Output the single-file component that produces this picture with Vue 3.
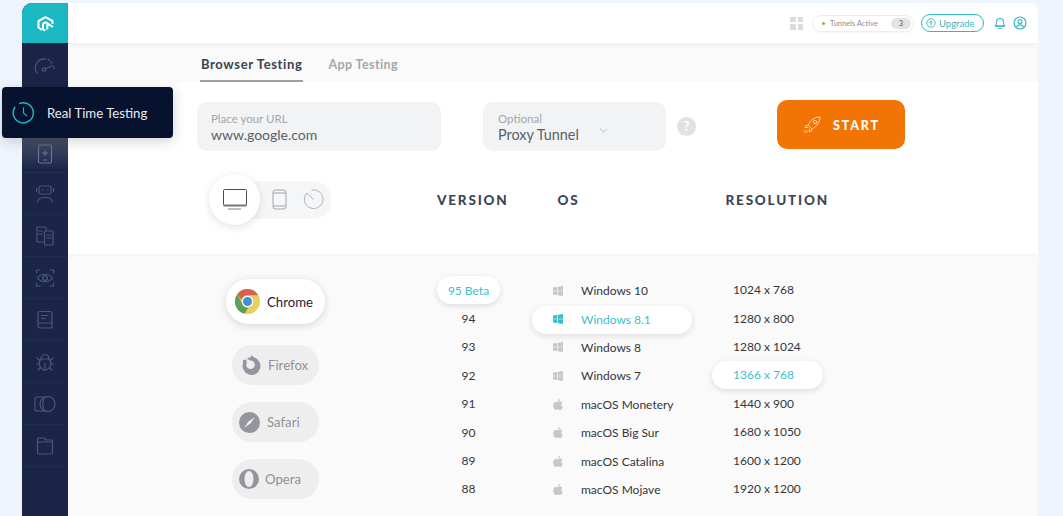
<script setup>
const navIcons = ['speed', 'clock', 'phone', 'robot', 'devices', 'eye', 'book', 'bug', 'compare', 'folder']
const versions = ['95 Beta', '94', '93', '92', '91', '90', '89', '88']
const systems = [
  { name: 'Windows 10', win: true },
  { name: 'Windows 8.1', win: true, active: true },
  { name: 'Windows 8', win: true },
  { name: 'Windows 7', win: true },
  { name: 'macOS Monetery' },
  { name: 'macOS Big Sur' },
  { name: 'macOS Catalina' },
  { name: 'macOS Mojave' },
]
const resolutions = ['1024 x 768', '1280 x 800', '1280 x 1024', '1366 x 768', '1440 x 900', '1680 x 1050', '1600 x 1200', '1920 x 1200']
</script>

<template>
  <div class="page">
    <div class="shell">
      <aside class="side">
        <div class="logo">
          <svg width="17" height="16" viewBox="0 0 17 16" fill="none" stroke="#fff" stroke-width="2" stroke-linejoin="round">
            <path d="M5 14 L1.500 11.500 V5 L8.500 1.200 L15.500 5 V8" />
            <path d="M8.500 6 L15.800 11 M8.500 6 L6 8 V13 L8.200 14.800 M10.300 8 V13.500" />
          </svg>
        </div>
        <div v-for="n in navIcons" :key="n" class="nav" :class="'nav-' + n">
          <svg width="22" height="22" viewBox="0 0 22 22" fill="none" stroke="#4a5878" stroke-width="1.200" stroke-linecap="round" stroke-linejoin="round">
            <template v-if="n === 'speed'">
              <path d="M3 18 A9 9 0 0 1 12 4" />
              <path d="M14.500 4.500 L19 9 M20 12 V15" stroke-dasharray="1.500 2" />
              <circle cx="10" cy="14.500" r="1.700" />
              <path d="M12 13.500 L19 10.500" />
            </template>
            <template v-else-if="n === 'phone'">
              <rect x="4.500" y="2" width="13" height="18" rx="1.500" />
              <path d="M11 7.500 V12.500 M8.500 10 H13.500 M9.500 17 H12.500" />
            </template>
            <template v-else-if="n === 'robot'">
              <rect x="5" y="3" width="12" height="8" rx="1.500" />
              <path d="M8 7 H9 M13 7 H14 M2.500 5.500 V8.500 M19.500 5.500 V8.500 M3.500 19 C3.500 13 18.500 13 18.500 19" />
            </template>
            <template v-else-if="n === 'devices'">
              <rect x="3" y="2" width="9" height="15" rx="1" />
              <rect x="10.500" y="6" width="8.500" height="14" rx="1" fill="#1a2548" />
              <path d="M5 6 H8 M5 9 H8 M13 10 H17 M13 13 H17" />
            </template>
            <template v-else-if="n === 'eye'">
              <path d="M2.500 6 V3 H6 M16 3 H19.500 V6 M2.500 16 V19 H6 M16 19 H19.500 V16" />
              <path d="M3.500 11 C7 6 15 6 18.500 11 C15 16 7 16 3.500 11 Z" />
              <circle cx="11" cy="11" r="2.400" />
            </template>
            <template v-else-if="n === 'book'">
              <path d="M4 15 V4.500 A2 2 0 0 1 6 2.500 H16 A2 2 0 0 1 18 4.500 V19 H6 A2 2 0 0 1 4 17 V15.500 A2 2 0 0 1 6 14 H18" />
              <path d="M7.500 6.500 H14 M7.500 9.500 H11.500" />
            </template>
            <template v-else-if="n === 'bug'">
              <path d="M7 8 C7 2 15 2 15 8 C18 11 18 17 11 19.500 C4 17 4 11 7 8 Z" />
              <path d="M7 8 H15 M11 12 V19 M3 7 L6 9.500 M19 7 L16 9.500 M2.500 13 H5 M17 13 H19.500 M4 19 L6.500 16.500 M18 19 L15.500 16.500" />
            </template>
            <template v-else-if="n === 'compare'">
              <path d="M13 4 H3 A2 2 0 0 0 1 6 V16 A2 2 0 0 0 3 18 H13" />
              <circle cx="13.500" cy="11" r="7.500" />
              <path d="M11 4 C8 8 8 14 11 18" />
            </template>
            <template v-else-if="n === 'folder'">
              <path d="M3.500 15 V4 A1 1 0 0 1 4.500 3 H10 L12 5 H17.500 A1 1 0 0 1 18.500 6 V7" />
              <rect x="3.500" y="7" width="15" height="12" rx="1.500" />
            </template>
          </svg>
        </div>
      </aside>

      <main class="main">
        <header class="top">
          <span class="grid-ico"><i></i><i></i><i></i><i></i></span>
          <div class="tunnels">
            <span class="dot"></span>
            <span class="tlabel">Tunnels Active</span>
            <span class="count">3</span>
          </div>
          <div class="upgrade">
            <svg width="10" height="10" viewBox="0 0 10 10" fill="none" stroke="#35b6c4" stroke-width="0.900"><circle cx="5" cy="5" r="4.200"/><path d="M5 7.500 V3 M3.300 4.600 L5 3 L6.700 4.600" /></svg>
            <span>Upgrade</span>
          </div>
          <svg class="bell" width="12" height="14" viewBox="0 0 13 14" fill="none" stroke="#35b6c4" stroke-width="1.100" stroke-linejoin="round"><path d="M1.500 10 C3 8.500 2.500 7 2.800 5 C3.200 1 9.800 1 10.200 5 C10.500 7 10 8.500 11.500 10 Z"/><path d="M1 10.500 H12 M5 13 H8"/></svg>
          <svg width="14" height="14" viewBox="0 0 14 14" fill="none" stroke="#35b6c4" stroke-width="1.100"><circle cx="7" cy="7" r="6"/><circle cx="7" cy="5.600" r="2"/><path d="M3.500 11.300 C4 8 10 8 10.500 11.300"/></svg>
        </header>

        <nav class="tabs">
          <span class="tab on">Browser Testing</span>
          <span class="tab off">App Testing</span>
        </nav>

        <section class="panel">
          <div class="form">
            <div class="field url">
              <span class="flabel">Place your URL</span>
              <span class="fvalue">www.google.com</span>
            </div>
            <div class="field proxy">
              <span class="flabel">Optional</span>
              <span class="fvalue">Proxy Tunnel</span>
              <svg class="chev" width="9" height="5" viewBox="0 0 10 6" fill="none" stroke="#a9adb3" stroke-width="1"><path d="M1 1 L5 5 L9 1"/></svg>
            </div>
            <span class="help">?</span>
            <button class="start">
              <svg width="20" height="20" viewBox="0 0 20 20" fill="none" stroke="#fbd9c0" stroke-width="1" stroke-linejoin="round" stroke-linecap="round">
                <path d="M6.500 10 C8 5 13 2 18 2 C18 7 15 12 10 13.500 Z"/>
                <circle cx="13" cy="7" r="1.700"/>
                <path d="M6.500 10 L4 10.500 L3 12.500 L6 12.500 M10 13.500 L9.500 16 L7.500 17 L7.500 14 M4 15 L2 17 M5.500 16 L4 18"/>
              </svg>
              <span>START</span>
            </button>
          </div>
          <div class="heads">
            <div class="seg">
              <span class="seg-on">
                <svg width="24" height="21" viewBox="0 0 24 21" fill="none" stroke="#4a4f57" stroke-width="1"><rect x="0.500" y="0.500" width="23" height="16" rx="1"/><path d="M0.500 16.500 H23.500" stroke="#777" stroke-width="2"/><path d="M5 20 H18" stroke="#aaa" stroke-width="1.500"/></svg>
              </span>
              <svg class="seg-i" width="15" height="21" viewBox="0 0 15 21" fill="none" stroke="#a0a4aa" stroke-width="1"><rect x="1" y="1" width="13" height="19" rx="2.500"/><path d="M1 4 H14 M1 17 H14"/></svg>
              <svg class="seg-i2" width="21" height="21" viewBox="0 0 21 21" fill="none" stroke="#b0b4b9" stroke-width="1"><path d="M8.500 1.200 A9.300 9.300 0 1 1 3.800 4 L10.500 10.500"/></svg>
            </div>
            <span class="h h-ver">VERSION</span>
            <span class="h h-os">OS</span>
            <span class="h h-res">RESOLUTION</span>
          </div>
        </section>

        <section class="list">
          <div class="browsers">
            <div class="br br-on">
              <svg width="25" height="25" viewBox="0 0 25 25">
                <circle cx="12.500" cy="12.500" r="12.500" fill="#e8cf5f"/>
                <path d="M12.500 0 A12.500 12.500 0 0 1 23.300 6.250 H12.500 A6.250 6.250 0 0 0 6.500 10.800 L2.200 5.300 A12.500 12.500 0 0 1 12.500 0 Z" fill="#d9604c"/>
                <path d="M2.200 5.300 L7 14 A6.250 6.250 0 0 0 13.300 18.700 L9.500 24.700 A12.500 12.500 0 0 1 2.200 5.300 Z" fill="#5ca15a"/>
                <circle cx="12.500" cy="12.500" r="5.800" fill="#fff"/>
                <circle cx="12.500" cy="12.500" r="4.500" fill="#3f92d2"/>
              </svg>
              <span>Chrome</span>
            </div>
            <div class="br br-ff">
              <svg width="19" height="20" viewBox="0 0 19 20">
                <circle cx="9.500" cy="11" r="9" fill="#94969e"/>
                <path d="M9 0 L14 4 L9 5 Z" fill="#94969e"/>
                <circle cx="8.500" cy="9.800" r="4.300" fill="#eee"/>
                <path d="M2 1.500 L8 5.500 L5.800 8 L0 7 Z" fill="#eee"/>
                <path d="M1 5 L4.500 4.500 L4.500 9 L1 10 Z" fill="#94969e"/>
              </svg>
              <span>Firefox</span>
            </div>
            <div class="br">
              <svg width="21" height="21" viewBox="0 0 21 21"><circle cx="10.500" cy="10.500" r="10.500" fill="#94969e"/><path d="M16 5 L11.500 11.500 L5 16 L9.500 9.500 Z" fill="#eee"/></svg>
              <span>Safari</span>
            </div>
            <div class="br br-op">
              <svg width="20" height="20" viewBox="0 0 20 20"><circle cx="10" cy="10" r="10" fill="#94969e"/><ellipse cx="10" cy="10" rx="4.500" ry="8" fill="#eee"/></svg>
              <span>Opera</span>
            </div>
          </div>

          <div class="col vers">
            <div v-for="(v, i) in versions" :key="v" class="row" :class="{ pill: i === 0 }">{{ v }}</div>
          </div>

          <div class="col oses">
            <div v-for="o in systems" :key="o.name" class="row" :class="{ pill: o.active }">
              <svg v-if="o.win" width="10" height="10" viewBox="0 0 11 11" :fill="o.active ? '#35c0cc' : '#c5c7ca'"><path d="M0 1.700 L4.800 1 V5.200 H0 Z M5.500 0.900 L11 0 V5.200 H5.500 Z M0 5.900 H4.800 V10 L0 9.300 Z M5.500 5.900 H11 V11 L5.500 10.100 Z"/></svg>
              <svg v-else width="10" height="11" viewBox="0 0 11 12" fill="#c5c7ca"><path d="M7.800 0 C7.800 1.500 6.700 2.800 5.300 2.700 C5.200 1.300 6.500 0.100 7.800 0 Z M5.400 3.400 C6.200 3.400 6.900 2.800 7.900 2.800 C8.800 2.800 9.700 3.300 10.300 4.100 C8.500 5.200 8.800 7.900 10.800 8.700 C10.300 10 9.200 12 8 12 C7 12 6.800 11.400 5.600 11.400 C4.400 11.400 4.100 12 3.200 12 C1.900 12 0.200 9.400 0.200 7 C0.200 4.500 1.800 2.900 3.400 2.900 C4.200 2.900 4.900 3.400 5.400 3.400 Z"/></svg>
              <span>{{ o.name }}</span>
            </div>
          </div>

          <div class="col ress">
            <div v-for="(r, i) in resolutions" :key="r" class="row" :class="{ pill: i === 3 }">{{ r }}</div>
          </div>
        </section>
      </main>
    </div>

    <div class="tip">
      <svg width="23" height="23" viewBox="0 0 24 24" fill="none" stroke="#1fb6c4" stroke-width="1.500" stroke-linecap="round"><path d="M8 2.500 A10.500 10.500 0 1 1 3 6.500"/><path d="M12 7 V12.500 L15.500 15.500" stroke-width="1.200"/></svg>
      <span>Real Time Testing</span>
    </div>
  </div>
</template>

<style>
html, body { margin: 0; background: #eff5fd; }
</style>

<style scoped>
.page {
  position: relative;
  width: 1063px;
  height: 516px;
  overflow: hidden;
  background: #eff5fd;
  font-family: Lato, "Noto Sans", sans-serif;
  box-sizing: border-box;
  padding: 3px 25px 0 22px;
}
.shell {
  display: flex;
  height: 513px;
  border-radius: 10px 10px 0 0;
  overflow: hidden;
}
.side {
  width: 46px;
  flex: none;
  background: #1a2548;
}
.logo {
  height: 40px;
  background: #1cb9c5;
  display: flex;
  align-items: center;
  justify-content: center;
  padding-top: 1px;
  box-sizing: border-box;
}
.nav {
  height: 42px;
  display: flex;
  align-items: center;
  justify-content: center;
  border-bottom: 1px solid #202c50;
  box-sizing: border-box;
}
.nav-speed { height: 46px; }
.nav-phone {
  padding-top: 5px;
  background: linear-gradient(#484f69 15%, #1a2548 95%);
}
.nav-phone svg { stroke: #6a7390; }
.main {
  flex: 1;
  display: flex;
  flex-direction: column;
  min-width: 0;
  background: #fff;
}
.top {
  height: 40px;
  flex: none;
  display: flex;
  align-items: center;
  justify-content: flex-end;
  padding-right: 11px;
  background: #fff;
  box-shadow: 0 2px 6px rgba(0, 0, 0, 0.05);
  position: relative;
}
.grid-ico {
  display: grid;
  grid-template-columns: 5.500px 5.500px;
  gap: 2px;
  margin-right: 9px;
}
.grid-ico i { height: 5.500px; background: #dcdcdc; }
.tunnels {
  width: 102px;
  height: 17px;
  box-sizing: border-box;
  border: 1px solid #eeeeee;
  border-radius: 9px;
  display: flex;
  align-items: center;
  padding: 0 2px 0 9px;
  margin-right: 7px;
  box-shadow: 0 1px 2px rgba(0, 0, 0, 0.04);
}
.dot { width: 3px; height: 3px; border-radius: 50%; background: #7ac143; margin-right: 5px; }
.tlabel { font-size: 7.500px; color: #8d9095; flex: 1; }
.count {
  width: 20px;
  height: 11px;
  line-height: 11px;
  border-radius: 6px;
  background: #e4e4e4;
  font-size: 7px;
  color: #555;
  text-align: center;
}
.upgrade {
  width: 63px;
  height: 18px;
  box-sizing: border-box;
  border: 1px solid #35b6c4;
  border-radius: 9px;
  display: flex;
  align-items: center;
  gap: 3px;
  padding-left: 4px;
  font-size: 9.500px;
  color: #35b6c4;
  margin-right: 10px;
}
.bell { margin-right: 7px; }
.tabs {
  height: 39px;
  flex: none;
  background: #fafafa;
  display: flex;
  gap: 24px;
  padding-left: 132px;
  box-sizing: border-box;
}
.tab {
  font-weight: 700;
  height: 37px;
  line-height: 43px;
  padding: 0 1px;
}
.tab.on {
  font-size: 13px;
  letter-spacing: 0.630px;
  color: #39424e;
  border-bottom: 2px solid #9aa0a6;
}
.tab.off {
  font-size: 12.500px;
  letter-spacing: 0.400px;
  color: #a3a7ac;
}
.panel {
  height: 172px;
  flex: none;
  background: #fff;
  box-sizing: border-box;
  padding-left: 129px;
  padding-top: 18px;
}
.form { display: flex; align-items: flex-start; }
.field {
  height: 49px;
  margin-top: 2px;
  background: #f2f3f5;
  border-radius: 10px;
  display: flex;
  flex-direction: column;
  justify-content: center;
  box-sizing: border-box;
  position: relative;
}
.url { width: 244px; padding-left: 14px; margin-right: 42px; }
.proxy { width: 183px; padding-left: 15px; margin-right: 11px; }
.flabel { font-size: 11.500px; color: #a3a7ac; line-height: 15px; }
.fvalue { line-height: 17px; color: #5a5f66; }
.url .fvalue { font-size: 14px; }
.proxy .fvalue { font-size: 14.400px; }
.chev { position: absolute; left: 116px; top: 26px; }
.help {
  width: 19px;
  height: 19px;
  margin-top: 17px;
  border-radius: 50%;
  background: #e2e2e2;
  color: #fff;
  font-size: 13px;
  font-weight: 700;
  line-height: 19px;
  text-align: center;
  margin-right: 81px;
}
.start {
  width: 128px;
  height: 49px;
  border: 0;
  border-radius: 10px;
  background: #f27405;
  color: #fff;
  font: 900 12.500px Lato, sans-serif;
  letter-spacing: 1.800px;
  display: flex;
  align-items: center;
  justify-content: center;
  gap: 11px;
  padding: 1px 0 0;
}
.heads {
  display: flex;
  align-items: center;
  height: 51px;
  margin-top: 23px;
}
.seg {
  margin-left: 12px;
  width: 123px;
  height: 38px;
  background: #f5f6f7;
  border-radius: 19px;
  display: flex;
  align-items: center;
  flex: none;
}
.seg-on {
  width: 51px;
  height: 51px;
  border-radius: 50%;
  background: #fff;
  box-shadow: 0 2px 9px rgba(0, 0, 0, 0.12);
  display: flex;
  align-items: center;
  justify-content: center;
  flex: none;
}
.seg-i { margin-left: 12px; }
.seg-i2 { margin-left: 16px; }
.h {
  font-size: 13.500px;
  font-weight: 900;
  letter-spacing: 1.800px;
  color: #3a4658;
  flex: none;
}
.h-ver { margin-left: 105px; }
.h-os { margin-left: 49px; }
.h-res { margin-left: 146px; }
.list {
  flex: 1;
  background: #fafafa;
  box-shadow: inset 0 4px 6px -4px rgba(0, 0, 0, 0.04);
  display: flex;
  align-items: flex-start;
  padding-top: 22px;
  min-height: 0;
}
.browsers {
  width: 369px;
  flex: none;
  display: flex;
  flex-direction: column;
  align-items: flex-start;
  padding: 3px 0 0 164px;
  box-sizing: border-box;
}
.br {
  width: 87px;
  height: 40px;
  border-radius: 20px;
  background: #eeeeee;
  display: flex;
  align-items: center;
  gap: 7px;
  font-size: 13.200px;
  color: #8f9298;
  margin-bottom: 17px;
  padding-left: 7px;
  box-sizing: border-box;
}
.br-ff { padding-left: 10px; }
.br-op { gap: 6px; }
.br-on {
  width: 99px;
  height: 45px;
  border-radius: 23px;
  background: #fff;
  color: #1f2328;
  box-shadow: 0 2px 8px rgba(0, 0, 0, 0.14);
  margin-bottom: 21px;
  margin-left: -6px;
  padding-left: 9px;
}
.col { flex: none; font-size: 12px; color: #33373d; display: flex; flex-direction: column; }
.row {
  height: 28.400px;
  display: flex;
  align-items: center;
  box-sizing: border-box;
  border-radius: 14px;
}
.pill {
  background: #fff;
  color: #3cc0cc;
  box-shadow: 0 2px 6px rgba(0, 0, 0, 0.12);
}
.vers { width: 63px; }
.vers .row { justify-content: center; }
.oses { width: 160px; margin-left: 32px; margin-top: 0.500px; }
.oses .row { padding-left: 21px; gap: 18px; }
.oses .pill { height: 27.400px; margin: 1.500px 0 -0.500px; padding-bottom: 1.500px; }
.ress { width: 111px; margin-left: 20px; margin-top: -0.500px; }
.ress .row { padding-left: 21px; }
.tip {
  position: absolute;
  left: 2px;
  top: 87px;
  width: 171px;
  height: 51px;
  background: #07122e;
  border-radius: 4px;
  box-shadow: 0 3px 14px rgba(0, 0, 0, 0.18);
  display: flex;
  align-items: center;
  padding-left: 10px;
  gap: 12px;
  box-sizing: border-box;
  color: #e8ecf1;
  font-size: 13.200px;
}
</style>
